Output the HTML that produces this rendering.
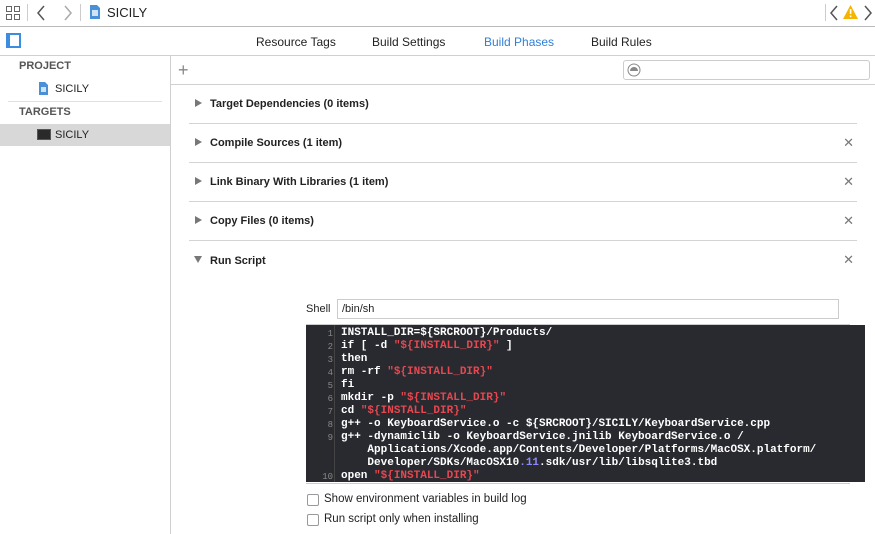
<!DOCTYPE html><html><head><style>
body{margin:0;width:875px;height:534px;overflow:hidden;background:#fff;font-family:"Liberation Sans",sans-serif;font-size:12px;color:#222;position:relative}
.a{position:absolute}
.hl{position:absolute;height:1px;background:#d0d0d0}
.sec{position:absolute;left:189px;width:668px;height:39px;border-bottom:1px solid #d4d4d4}
.sec b{position:absolute;left:21px;top:14px;font-size:11px}
.tri{position:absolute;left:6px;top:15px;width:0;height:0;border-left:7px solid #777;border-top:4px solid transparent;border-bottom:4px solid transparent}
.x{position:absolute;right:3px;top:12px;color:#777;font-size:13px}
.code{position:absolute;left:306px;top:325px;width:559px;height:157px;background:#292a30;font-family:"Liberation Mono",monospace;font-weight:bold;font-size:11px;color:#fff;line-height:13px}
.ln{position:absolute;left:0;width:27px;text-align:right;color:#888;font-weight:normal;font-size:9px}
.r{color:#e8474f}
.cb{position:absolute;width:10px;height:10px;border:1px solid #999;border-radius:2px;background:#fff}
</style></head><body>
<svg class="a" style="left:6px;top:6px" width="14" height="14"><g fill="none" stroke="#666"><rect x="0.5" y="0.5" width="5" height="5"/><rect x="8.5" y="0.5" width="5" height="5"/><rect x="0.5" y="8.5" width="5" height="5"/><rect x="8.5" y="8.5" width="5" height="5"/></g></svg>
<div class="a" style="left:27px;top:4px;width:1px;height:17px;background:#ccc"></div>
<svg class="a" style="left:36px;top:5px" width="10" height="16"><path d="M8 1L2 8l6 7" stroke="#555" stroke-width="1.5" fill="none"/></svg>
<svg class="a" style="left:63px;top:5px" width="10" height="16"><path d="M2 1l6 7-6 7" stroke="#aaa" stroke-width="1.5" fill="none"/></svg>
<div class="a" style="left:80px;top:4px;width:1px;height:17px;background:#ccc"></div>
<svg class="a" style="left:89px;top:4px" width="12" height="16"><path d="M1 1h7l3 3v11H1z" fill="#4a90d9"/><rect x="3" y="6" width="6" height="6" fill="#cfe3f7"/></svg>
<div class="a" style="left:107px;top:5px;font-size:13px">SICILY</div>
<div class="a" style="left:825px;top:4px;width:1px;height:17px;background:#ccc"></div>
<svg class="a" style="left:829px;top:5px" width="10" height="16"><path d="M8 1L2 8l6 7" stroke="#555" stroke-width="1.5" fill="none"/></svg>
<svg class="a" style="left:843px;top:5px" width="15" height="14"><path d="M7.5 0L15 14H0z" fill="#f4b400"/><rect x="6.8" y="4" width="1.6" height="5" fill="#fff"/><rect x="6.8" y="10.5" width="1.6" height="1.6" fill="#fff"/></svg>
<svg class="a" style="left:863px;top:5px" width="10" height="16"><path d="M2 1l6 7-6 7" stroke="#555" stroke-width="1.5" fill="none"/></svg>
<div class="hl" style="left:0;top:26px;width:875px;background:#bbb"></div>
<div class="a" style="left:6px;top:33px;border:2px solid #3c8de0;box-sizing:border-box;border-left-width:4px;width:15px;height:15px"></div>
<div class="a" style="left:256px;top:35px">Resource Tags</div>
<div class="a" style="left:372px;top:35px">Build Settings</div>
<div class="a" style="left:484px;top:35px;color:#2f7fd8">Build Phases</div>
<div class="a" style="left:591px;top:35px">Build Rules</div>
<div class="hl" style="left:0;top:55px;width:875px"></div>
<div class="a" style="left:170px;top:56px;width:1px;height:478px;background:#d0d0d0"></div>
<div class="a" style="left:19px;top:60px;font-weight:bold;font-size:11px;color:#555">PROJECT</div>
<svg class="a" style="left:38px;top:81px" width="11" height="15"><path d="M1 1h6l3 3v10H1z" fill="#4a90d9"/><rect x="3" y="6" width="5" height="5" fill="#cfe3f7"/></svg>
<div class="a" style="left:55px;top:83px;font-size:11px">SICILY</div>
<div class="hl" style="left:8px;top:101px;width:154px;background:#e0e0e0"></div>
<div class="a" style="left:19px;top:106px;font-weight:bold;font-size:11px;color:#555">TARGETS</div>
<div class="a" style="left:0;top:124px;width:170px;height:22px;background:#d8d8d8"></div>
<div class="a" style="left:37px;top:129px;width:14px;height:11px;background:#2a2a2a;border:1px solid #555;box-sizing:border-box"></div>
<div class="a" style="left:55px;top:129px;font-size:11px">SICILY</div>
<div class="a" style="left:178px;top:60px;font-size:18px;color:#888;font-weight:300">+</div>
<div class="a" style="left:623px;top:60px;width:247px;height:20px;border:1px solid #ccc;border-radius:3px;box-sizing:border-box"></div>
<svg class="a" style="left:627px;top:63px" width="14" height="14"><circle cx="7" cy="7" r="6" fill="none" stroke="#888"/><path d="M3 8a4 4 0 0 1 8 0z" fill="#888"/></svg>
<div class="hl" style="left:171px;top:84px;width:704px"></div>
<div class="sec" style="top:84px"><div class="tri"></div><b>Target Dependencies (0 items)</b></div>
<div class="sec" style="top:123px"><div class="tri"></div><b>Compile Sources (1 item)</b><span class="x">✕</span></div>
<div class="sec" style="top:162px"><div class="tri"></div><b>Link Binary With Libraries (1 item)</b><span class="x">✕</span></div>
<div class="sec" style="top:201px"><div class="tri"></div><b>Copy Files (0 items)</b><span class="x">✕</span></div>
<div class="a" style="left:189px;top:240px;width:668px"><div class="a" style="left:5px;top:16px;border-top:7px solid #777;border-left:4px solid transparent;border-right:4px solid transparent"></div><b class="a" style="left:21px;top:15px;font-size:11px">Run Script</b><span class="a" style="right:3px;top:12px;color:#777;font-size:13px">✕</span></div>
<div class="a" style="left:306px;top:303px;font-size:11px">Shell</div>
<div class="a" style="left:337px;top:299px;width:502px;height:20px;border:1px solid #ccc;box-sizing:border-box;padding:3px 4px;font-size:11px">/bin/sh</div>
<div class="hl" style="left:306px;top:324px;width:544px;background:#ccc"></div>
<div class="code">
<div class="a" style="left:28px;top:0;width:1px;height:157px;background:#444"></div>
<div class="ln" style="top:3px">1</div><div class="ln" style="top:16px">2</div><div class="ln" style="top:29px">3</div><div class="ln" style="top:42px">4</div><div class="ln" style="top:55px">5</div><div class="ln" style="top:68px">6</div><div class="ln" style="top:81px">7</div><div class="ln" style="top:94px">8</div><div class="ln" style="top:107px">9</div><div class="ln" style="top:146px">10</div>
<pre class="a" style="left:35px;top:2px;margin:0;font:inherit;white-space:pre">INSTALL_DIR=${SRCROOT}/Products/
if [ -d <span class="r">"${INSTALL_DIR}"</span> ]
then
rm -rf <span class="r">"${INSTALL_DIR}"</span>
fi
mkdir -p <span class="r">"${INSTALL_DIR}"</span>
cd <span class="r">"${INSTALL_DIR}"</span>
g++ -o KeyboardService.o -c ${SRCROOT}/SICILY/KeyboardService.cpp
g++ -dynamiclib -o KeyboardService.jnilib KeyboardService.o /
    Applications/Xcode.app/Contents/Developer/Platforms/MacOSX.platform/
    Developer/SDKs/MacOSX10<span style="color:#8b87ff">.11</span>.sdk/usr/lib/libsqlite3.tbd
open <span class="r">"${INSTALL_DIR}"</span></pre>
</div>
<div class="hl" style="left:306px;top:483px;width:544px;background:#ccc"></div>
<div class="cb" style="left:307px;top:494px"></div><div class="a" style="left:324px;top:493px;font-size:11.5px">Show environment variables in build log</div>
<div class="cb" style="left:307px;top:514px"></div><div class="a" style="left:324px;top:513px;font-size:11.5px">Run script only when installing</div>
</body></html>
